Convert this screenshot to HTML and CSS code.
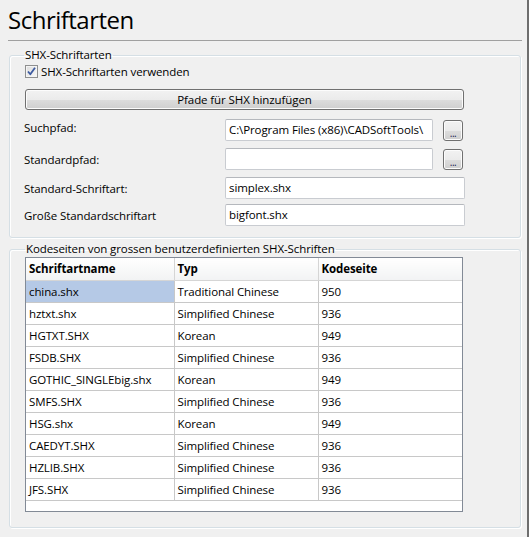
FILE: index.html
```html
<!DOCTYPE html>
<html lang="de">
<head>
<meta charset="utf-8">
<title>Schriftarten</title>
<link rel="stylesheet" href="styles.css">
</head>
<body>
<div class="window">
  <h1 class="title">Schriftarten</h1>
  <div class="rule"></div>

  <fieldset class="group group-shx">
    <legend>SHX-Schriftarten</legend>
    <label class="check-row">
      <span class="checkbox">
        <svg width="11" height="11" viewBox="0 0 11 11"><path d="M2 5.5 L4.3 8.3 L9 1.8" fill="none" stroke="#3c5aa0" stroke-width="1.8" stroke-linejoin="round"/></svg>
      </span>
      <span>SHX-Schriftarten verwenden</span>
    </label>
    <button class="wide-btn" type="button">Pfade für SHX hinzufügen</button>

    <div class="form-row row-1">
      <span class="lbl lbl-up">Suchpfad:</span>
      <div class="field short">C:\Program Files (x86)\CADSoftTools\</div>
      <button class="dots" type="button">...</button>
    </div>
    <div class="form-row row-2">
      <span class="lbl">Standardpfad:</span>
      <div class="field short"></div>
      <button class="dots" type="button">...</button>
    </div>
    <div class="form-row row-3">
      <span class="lbl">Standard-Schriftart:</span>
      <div class="field long">simplex.shx</div>
    </div>
    <div class="form-row row-4">
      <span class="lbl">Große Standardschriftart</span>
      <div class="field long">bigfont.shx</div>
    </div>
  </fieldset>

  <fieldset class="group group-codes">
    <legend>Kodeseiten von grossen benutzerdefinierten SHX-Schriften</legend>
    <div class="grid">
      <table>
        <thead>
          <tr><th class="c1">Schriftartname</th><th class="c2">Typ</th><th class="c3">Kodeseite</th></tr>
        </thead>
        <tbody>
          <tr><td class="c1 sel">china.shx</td><td>Traditional Chinese</td><td>950</td></tr>
          <tr><td class="c1">hztxt.shx</td><td>Simplified Chinese</td><td>936</td></tr>
          <tr><td class="c1">HGTXT.SHX</td><td>Korean</td><td>949</td></tr>
          <tr><td class="c1">FSDB.SHX</td><td>Simplified Chinese</td><td>936</td></tr>
          <tr><td class="c1">GOTHIC_SINGLEbig.shx</td><td>Korean</td><td>949</td></tr>
          <tr><td class="c1">SMFS.SHX</td><td>Simplified Chinese</td><td>936</td></tr>
          <tr><td class="c1">HSG.shx</td><td>Korean</td><td>949</td></tr>
          <tr><td class="c1">CAEDYT.SHX</td><td>Simplified Chinese</td><td>936</td></tr>
          <tr><td class="c1">HZLIB.SHX</td><td>Simplified Chinese</td><td>936</td></tr>
          <tr><td class="c1">JFS.SHX</td><td>Simplified Chinese</td><td>936</td></tr>
        </tbody>
      </table>
    </div>
  </fieldset>
</div>
</body>
</html>
```

FILE: styles.css
```css
* { box-sizing: border-box; }

html, body {
  margin: 0;
  padding: 0;
  background: #f0f0f0;
}

body {
  font-family: "Open Sans", "Noto Sans", "DejaVu Sans", sans-serif;
  font-size: 11.5px;
  letter-spacing: -0.1px;
  color: #000;
}

.window {
  width: 529px;
  height: 537px;
  border-right: 2px solid #6e6e6e;
  overflow: hidden;
}

.title {
  margin: 0 0 0 8px;
  height: 40px;
  padding-top: 5px;
  font-size: 24px;
  line-height: 30px;
  font-weight: 400;
  letter-spacing: -0.5px;
  color: #000;
}

.rule {
  margin-left: 8px;
  width: 514px;
  height: 1px;
  background: #a0a0a0;
}

.group {
  width: 512px;
  margin: 0 0 0 9px;
  padding: 0 0 0 5px;
  border: 1px solid #d5dfe5;
  border-radius: 3px;
  box-shadow: inset 1px 1px 0 #fff, 1px 1px 0 #fff;
  min-width: 0;
}

.group legend {
  padding: 0 1px;
  line-height: 16px;
  height: 16px;
  color: #000;
}

.group-shx {
  margin-top: 6px;
  height: 191px;
  padding-left: 14px;
}

.check-row {
  display: flex;
  align-items: center;
  height: 16px;
  gap: 3px;
  margin-left: 1px;
}

.checkbox {
  width: 13px;
  height: 13px;
  border: 1px solid #8e8f8f;
  background: linear-gradient(135deg, #dcdcdc, #f8f8f8);
  display: flex;
  align-items: center;
  justify-content: center;
  box-shadow: inset 0 0 0 1px #f4f4f4;
}

.wide-btn {
  display: block;
  margin-top: 10px;
  margin-left: 1px;
  width: 439px;
  height: 21px;
  border: 1px solid #707070;
  border-radius: 3px;
  background: linear-gradient(#f2f2f2 0%, #ebebeb 50%, #dddddd 51%, #cfcfcf 100%);
  box-shadow: inset 0 0 0 1px #fcfcfc;
  font: inherit;
  letter-spacing: inherit;
  color: #000;
  padding: 0;
}

.form-row {
  display: flex;
  align-items: center;
  height: 22px;
}

.row-1 { margin-top: 9px; }
.row-2 { margin-top: 7px; }
.row-3 { margin-top: 7px; }
.row-4 { margin-top: 5px; }

.lbl {
  width: 201px;
  flex: none;
}

.lbl-up { margin-top: -5px; }

.field {
  height: 22px;
  background: #fff;
  border: 1px solid #c9ccd1;
  border-top-color: #b5b8bd;
  border-radius: 2px;
  padding: 0 3px;
  line-height: 20px;
  white-space: nowrap;
  overflow: hidden;
}

.field.short { width: 208px; }
.field.long { width: 240px; }

.dots {
  margin-left: 10px;
  width: 20px;
  height: 21px;
  border: 1px solid #707070;
  border-radius: 3px;
  background: linear-gradient(#f2f2f2 0%, #ebebeb 50%, #dddddd 51%, #cfcfcf 100%);
  box-shadow: inset 0 0 0 1px #fcfcfc;
  font: inherit;
  font-size: 10px;
  line-height: 12px;
  padding: 5px 0 0;
  color: #1a1a50;
  letter-spacing: -0.5px;
}

.group-codes {
  margin-top: 3px;
  height: 287px;
  padding-left: 15px;
}

.grid {
  width: 438px;
  height: 255px;
  border: 1px solid #828a96;
  background: #fff;
  overflow: hidden;
}

table {
  border-collapse: collapse;
  width: 436px;
  table-layout: fixed;
}

th, td {
  height: 22px;
  padding: 0 0 0 3px;
  text-align: left;
  white-space: nowrap;
  overflow: hidden;
  border-right: 1px solid #c8c8c8;
  border-bottom: 1px solid #c8c8c8;
  font-weight: 400;
}

th {
  font-weight: 700;
  background: linear-gradient(#ffffff, #f2f3f4);
  border-right-color: #d5d5d5;
  border-bottom-color: #d5d5d5;
  height: 22px;
}

.c1 { width: 148px; }
.c2 { width: 144px; }
.c3 { width: 144px; }

td.sel { background: #b5c9e6; }
```
